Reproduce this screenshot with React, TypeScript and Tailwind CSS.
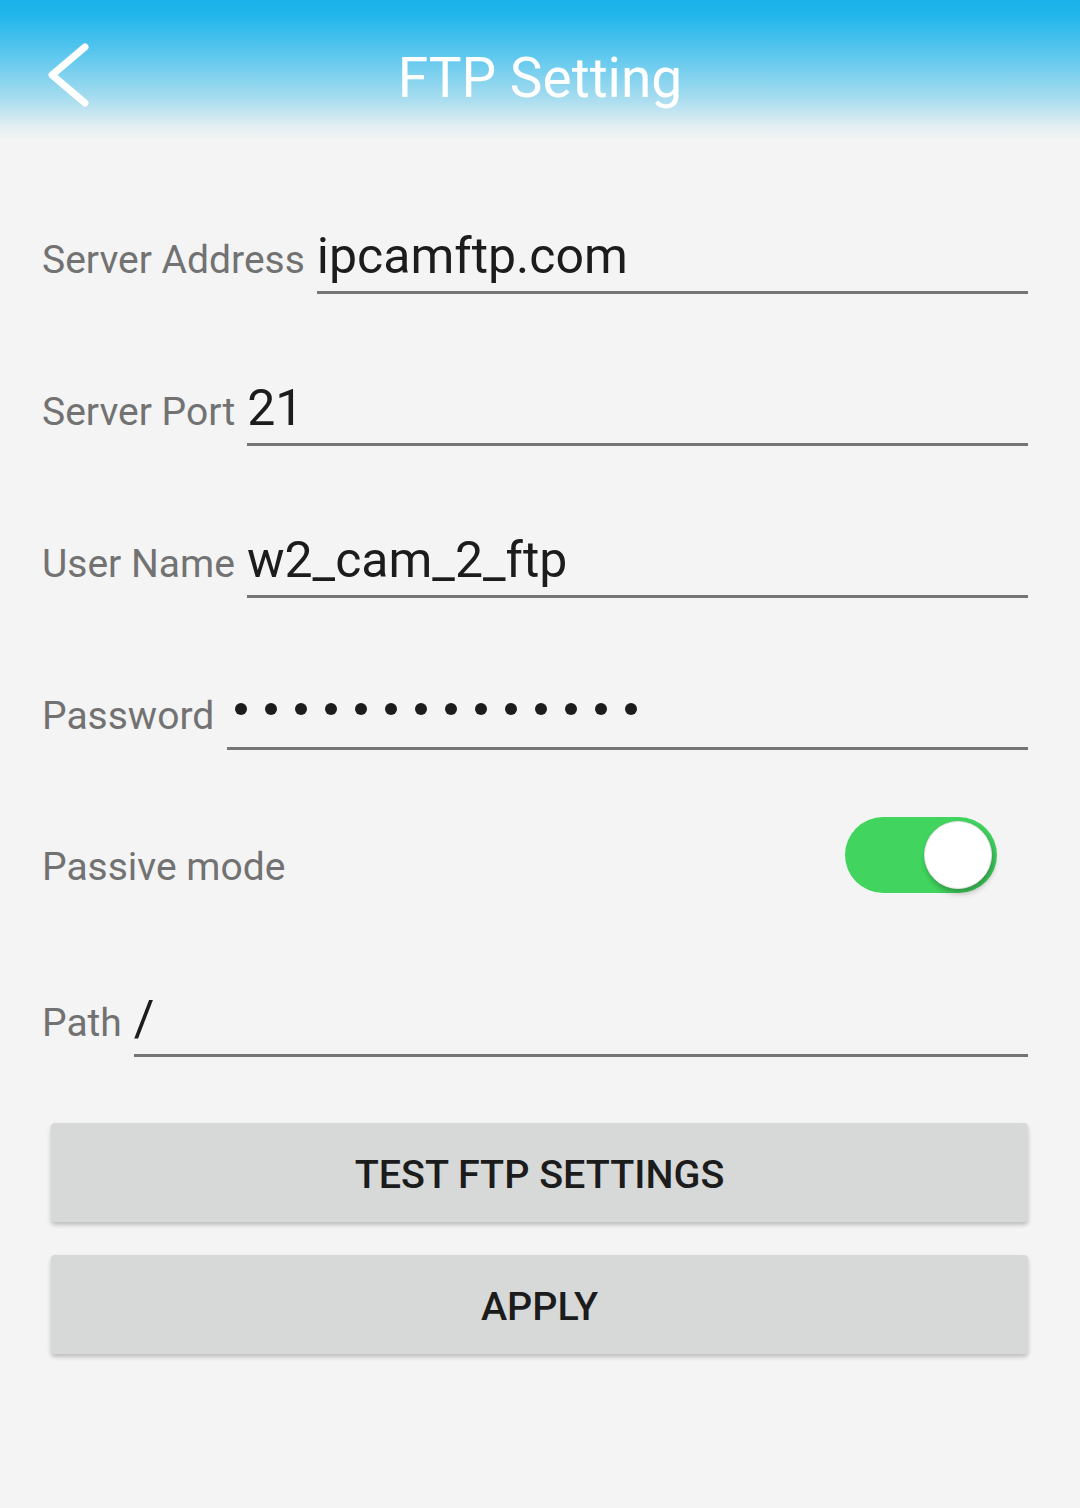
import React from "react";

const font = { fontFamily: "Roboto, 'Noto Sans', Arial, sans-serif" };

function Row({ label, value, mt }: { label: string; value: React.ReactNode; mt: string }) {
  return (
    <div className={`flex items-baseline pl-[42px] pr-[52px] ${mt}`}>
      <span className="text-[39px] leading-[44px] text-[#727272] whitespace-nowrap">{label}</span>
      <div className="ml-[12px] flex-1 border-b-[3px] border-[#757575] pb-[7px] text-[50px] leading-[56px] text-[#1c1c1c] whitespace-nowrap">
        {value}
      </div>
    </div>
  );
}

export default function App() {
  return (
    <div className="min-h-[1508px] w-full bg-[#f4f4f4]" style={font}>
      <div className="grid h-[140px] grid-cols-[1fr_auto_1fr] bg-[linear-gradient(to_bottom,#19b2ea_0%,#22b6eb_12%,#5fc8ee_40%,#a6dcef_70%,#e2eef2_90%,#f4f4f4_100%)]">
        <div className="pl-[40px] pt-[40px]">
          <svg width="50" height="70" viewBox="0 0 50 70" fill="none">
            <polyline points="45,7 12,35 45,63" stroke="white" strokeWidth="7" strokeLinecap="round" strokeLinejoin="round" />
          </svg>
        </div>
        <div className="pt-[46px] text-[55px] leading-[64px] text-white">FTP Setting</div>
        <div />
      </div>

      <Row label="Server Address" value="ipcamftp.com" mt="mt-[88px]" />
      <Row label="Server Port" value="21" mt="mt-[86px]" />
      <Row label="User Name" value="w2_cam_2_ftp" mt="mt-[86px]" />
      <div className="mt-[86px] flex items-end pl-[42px] pr-[52px]">
        <span className="pb-[12px] text-[39px] leading-[44px] text-[#727272] whitespace-nowrap">Password</span>
        <div className="ml-[13px] flex h-[66px] flex-1 items-start border-b-[3px] border-[#757575] pl-[8px] pt-[19px]">
          <div className="flex gap-[18px]">
            {Array.from({ length: 14 }).map((_, i) => (
              <div key={i} className="h-[12px] w-[12px] rounded-full bg-[#1c1c1c]" />
            ))}
          </div>
        </div>
      </div>

      <div className="mt-[67px] flex h-[76px] items-start justify-between pl-[42px] pr-[83px]">
        <span className="pt-[28px] text-[39px] leading-[44px] text-[#727272]">Passive mode</span>
        <div className="flex h-[76px] w-[152px] items-center justify-end rounded-full bg-[#41d55f] pr-[5px]">
          <div className="h-[68px] w-[68px] rounded-full border border-[#e2e2e2] bg-white shadow-[2px_4px_6px_rgba(0,0,0,0.3)]" />
        </div>
      </div>

      <div className="mt-[98px]">
        <Row label="Path" value="/" mt="mt-0" />
      </div>

      <div className="mt-[66px] flex flex-col gap-[33px] pl-[51px] pr-[52px]">
        <button className="flex h-[99px] items-center justify-center rounded-[4px] bg-[#d7d9d8] pt-[5px] text-[39.5px] font-medium text-[#1c1c1c] shadow-[0_3px_4px_rgba(0,0,0,0.22)]">
          TEST FTP SETTINGS
        </button>
        <button className="flex h-[99px] items-center justify-center rounded-[4px] bg-[#d7d9d8] pt-[5px] text-[39.5px] font-medium text-[#1c1c1c] shadow-[0_3px_4px_rgba(0,0,0,0.22)]">
          APPLY
        </button>
      </div>
    </div>
  );
}
